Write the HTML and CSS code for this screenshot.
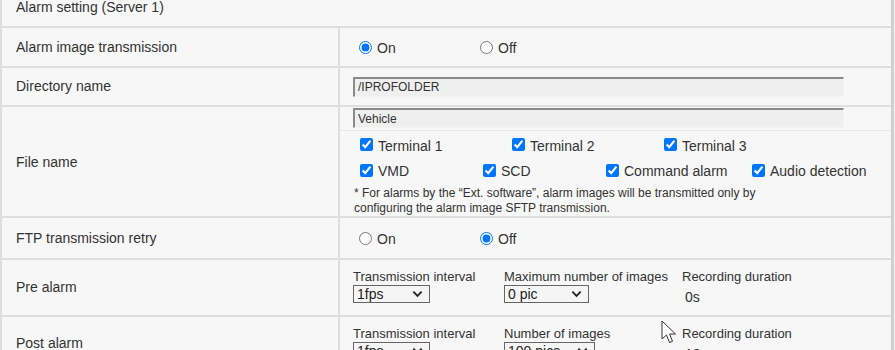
FILE: index.html
```html
<!DOCTYPE html>
<html lang="en">

<head>
    <meta charset="UTF-8">
    <link rel="stylesheet" href="styles.css">
    <title>Alarm setting</title>
</head>

<body>

    <div class="settings">
        <div class="section-title">Alarm setting (Server 1)</div>

        <div class="label-cell row-image">Alarm image transmission</div>
        <div class="value-cell row-image">
            <label class="radio"><input type="radio" name="imgTx" checked>On</label>
            <label class="radio"><input type="radio" name="imgTx">Off</label>
        </div>

        <div class="label-cell row-dir">Directory name</div>
        <div class="value-cell row-dir">
            <input type="text" class="text-box" value="/IPROFOLDER">
        </div>

        <div class="label-cell row-file">File name</div>
        <div class="value-cell row-file file-cell">
            <div class="file-top">
                <input type="text" class="text-box" value="Vehicle">
            </div>
            <div class="check-row first-row">
                <label class="check w-term"><input type="checkbox" checked>Terminal 1</label>
                <label class="check w-term"><input type="checkbox" checked>Terminal 2</label>
                <label class="check"><input type="checkbox" checked>Terminal 3</label>
            </div>
            <div class="check-row">
                <label class="check w-short"><input type="checkbox" checked>VMD</label>
                <label class="check w-short"><input type="checkbox" checked>SCD</label>
                <label class="check w-cmd"><input type="checkbox" checked>Command alarm</label>
                <label class="check"><input type="checkbox" checked>Audio detection</label>
            </div>
            <div class="note">
                * For alarms by the “Ext. software”, alarm images will be transmitted only by<br>
                configuring the alarm image SFTP transmission.
            </div>
        </div>

        <div class="label-cell row-retry">FTP transmission retry</div>
        <div class="value-cell row-retry">
            <label class="radio"><input type="radio" name="retry">On</label>
            <label class="radio"><input type="radio" name="retry" checked>Off</label>
        </div>

        <div class="label-cell row-pre">Pre alarm</div>
        <div class="value-cell row-pre sub-cell">
            <div class="sub col-interval">
                <div class="sub-label">Transmission interval</div>
                <div class="drop w-interval">1fps<svg viewBox="0 0 12 8"><path d="M1.5 1.5 L6 6 L10.5 1.5"/></svg></div>
            </div>
            <div class="sub col-count">
                <div class="sub-label">Maximum number of images</div>
                <div class="drop w-max">0 pic<svg viewBox="0 0 12 8"><path d="M1.5 1.5 L6 6 L10.5 1.5"/></svg></div>
            </div>
            <div class="sub">
                <div class="sub-label">Recording duration</div>
                <div class="duration">0s</div>
            </div>
        </div>

        <div class="label-cell row-post">Post alarm</div>
        <div class="value-cell row-post sub-cell">
            <div class="sub col-interval">
                <div class="sub-label">Transmission interval</div>
                <div class="drop w-interval">1fps<svg viewBox="0 0 12 8"><path d="M1.5 1.5 L6 6 L10.5 1.5"/></svg></div>
            </div>
            <div class="sub col-count">
                <div class="sub-label">Number of images</div>
                <div class="drop w-num">100 pics<svg viewBox="0 0 12 8"><path d="M1.5 1.5 L6 6 L10.5 1.5"/></svg></div>
            </div>
            <div class="sub">
                <div class="sub-label">Recording duration</div>
                <div class="duration">10s</div>
            </div>
        </div>
    </div>

    <!-- mouse pointer sitting over the page -->
    <svg class="pointer" viewBox="0 0 17 25">
        <path d="M1 1 L1 19 L5.5 15 L8.5 22.5 L11.5 21.3 L8.6 14 L14.5 14 Z"/>
    </svg>

</body>

</html>
```

FILE: styles.css
```css
body {
    margin: 0;
    padding: 0;
    background: #f7f7f7;
    font-family: 'Liberation Sans', Arial, sans-serif;
    font-size: 14px;
    color: #333;
    overflow: hidden;
}

.settings {
    width: 889px;
    display: grid;
    grid-template-columns: 336px 551px;
    grid-template-rows: 26px 38px 37px 109px 40px 55px 52px;
    gap: 2px;
    background: #dedede;
    border-left: 2px solid #dedede;
    border-right: 3px solid #cfcfcf;
}

.section-title {
    grid-column: 1 / 3;
    background: #f7f7f7;
    padding-left: 14px;
    line-height: 14px;
}

.label-cell,
.value-cell {
    background: #f7f7f7;
    display: flex;
    align-items: center;
}

.label-cell {
    padding-left: 14px;
}

.label-cell.row-dir,
.label-cell.row-pre {
    padding-bottom: 2px;
}

.value-cell {
    padding-left: 13px;
}

.radio {
    display: flex;
    align-items: center;
    width: 121px;
    padding-top: 2px;
}

.radio input {
    margin: 0 5px 2px 6px;
    width: 13px;
    height: 13px;
}

.text-box {
    width: 491px;
    height: 20px;
    box-sizing: border-box;
    margin: 0;
    padding: 0 3px;
    font-family: 'Liberation Sans', Arial, sans-serif;
    font-size: 12px;
    color: #333;
    background: #efefef;
    border: 1px solid #f3f3f3;
    border-top: 2px solid #8a8a8a;
    border-left: 2px solid #8a8a8a;
}

.file-cell {
    flex-direction: column;
    align-items: stretch;
    justify-content: flex-start;
    padding-left: 0;
}

.file-top {
    padding: 1px 0 2px 13px;
    border-bottom: 1px solid #e9e9e9;
}

.check-row {
    display: flex;
    align-items: center;
    height: 26px;
    padding-left: 13px;
}

.first-row {
    margin-top: 2px;
    height: 27px;
}

.check {
    display: flex;
    align-items: center;
}

.check input {
    margin: 0 5px 2px 7px;
    width: 13px;
    height: 13px;
}

.w-term {
    width: 152px;
}

.w-short {
    width: 123px;
}

.w-cmd {
    width: 146px;
}

.note {
    padding: 2px 0 0 14px;
    font-size: 12px;
    line-height: 15px;
}

.sub-cell {
    align-items: flex-start;
    padding-top: 9px;
    box-sizing: border-box;
}

.sub {
    display: flex;
    flex-direction: column;
}

.col-interval {
    width: 151px;
}

.col-count {
    width: 178px;
}

.sub-label {
    font-size: 13px;
    line-height: 16px;
}

.drop {
    box-sizing: border-box;
    height: 18px;
    border: 1px solid #666;
    background: #f5f5f5;
    color: #222;
    font-size: 14px;
    line-height: 16px;
    padding-left: 3px;
    display: flex;
    align-items: center;
    justify-content: space-between;
}

.drop svg {
    width: 11px;
    height: 8px;
    margin-right: 6px;
    fill: none;
    stroke: #222;
    stroke-width: 2;
}

.w-interval {
    width: 77px;
}

.w-max {
    width: 85px;
}

.w-num {
    width: 91px;
}

.duration {
    padding: 4px 0 0 3px;
    line-height: 16px;
}

.pointer {
    position: absolute;
    left: 661px;
    top: 320px;
    width: 17px;
    height: 25px;
    fill: #fff;
    stroke: #333;
    stroke-width: 1;
}
```
